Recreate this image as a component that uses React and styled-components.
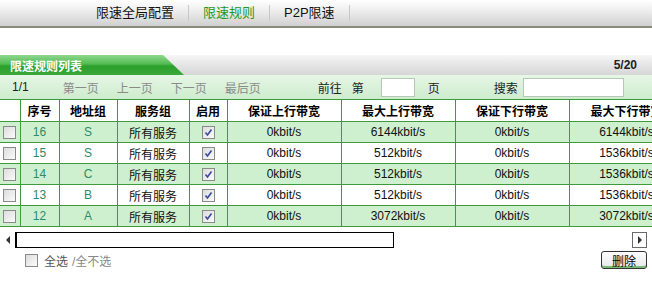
import React from 'react';
import styled, { createGlobalStyle } from 'styled-components';

const GlobalStyle = createGlobalStyle`
  body {
    margin: 0;
    background: #fff;
    font-family: "Liberation Sans", "Noto Sans CJK SC", sans-serif;
    font-size: 12px;
    color: #000;
  }
`;

const Page = styled.div`
  width: 652px;
  height: 281px;
  overflow: hidden;
`;

// Top tab bar
const TopBar = styled.div`
  height: 26px;
  display: flex;
  align-items: center;
  padding-left: 85px;
  background: linear-gradient(to bottom, #ffffff, #eeeeee 40%, #d0d0d0);
  border-bottom: 2px solid #8a8a7a;
`;

const TopTab = styled.div`
  padding: 0 14px 0 11px;
  font-size: 13px;
  color: ${p => (p.active ? '#1e9a1e' : '#111')};
  border-right: 1px solid #c8c8c8;
  line-height: 14px;
  height: 16px;
  display: flex;
  align-items: center;
  margin-right: 3px;
`;

// Section title
const TitleBar = styled.div`
  margin-top: 27px;
  height: 20px;
  display: flex;
  align-items: stretch;
  background: linear-gradient(to bottom, #f6f6f6, #e2e2e2 60%, #d6d6d6);
`;

const TitleTab = styled.div`
  width: 184px;
  padding-left: 10px;
  display: flex;
  align-items: center;
  font-weight: bold;
  color: #fff;
  font-size: 12px;
  background: linear-gradient(to bottom, #8ed88e, #52bb52 45%, #2c9f2c 55%, #3aa83a);
  clip-path: polygon(0 0, 163px 0, 184px 100%, 0 100%);
  box-sizing: border-box;
`;

const TitleCount = styled.div`
  margin-left: auto;
  padding-right: 15px;
  display: flex;
  align-items: center;
  font-weight: bold;
  color: #222;
`;

// Pager
const Pager = styled.div`
  height: 24px;
  display: flex;
  align-items: center;
  background: linear-gradient(to bottom, #e6f6e6, #cdeccd);
  color: #222;
`;

const PageItem = styled.span`
  color: ${p => (p.muted ? '#8a8a8a' : '#222')};
  margin-left: ${p => p.ml}px;
`;

const Input = styled.div`
  width: ${p => p.w}px;
  height: 17px;
  background: #fff;
  border: 1px solid #b8c8b8;
  margin-left: ${p => p.ml}px;
`;

// Table
const TableWrap = styled.div`
  width: 652px;
  overflow: hidden;
`;

const Table = styled.table`
  border-collapse: collapse;
  table-layout: fixed;
  width: 684px;
  border-top: 1px solid #3f9a3f;
`;

const Th = styled.th`
  height: 21px;
  padding: 0;
  border: 1px solid #3f9a3f;
  border-top: none;
  background: #fff;
  font-weight: bold;
  font-size: 12px;
  text-align: center;
  white-space: nowrap;
  overflow: hidden;
  &:first-child { border-left: none; }
`;

const Td = styled.td`
  height: 20px;
  padding: 0;
  border: 1px solid #3f9a3f;
  text-align: center;
  white-space: nowrap;
  overflow: hidden;
  color: ${p => (p.teal ? '#2d8a6a' : '#111')};
  &:first-child { border-left: none; }
`;

const Tr = styled.tr`
  background: ${p => (p.alt ? '#ffffff' : '#cff0cf')};
`;

const Box = styled.span`
  display: inline-flex;
  align-items: center;
  justify-content: center;
  width: 11px;
  height: 11px;
  border: 1px solid #8a8a8a;
  background: linear-gradient(135deg, #dcdcdc, #fbfbfb);
  vertical-align: middle;
`;

const CheckBox = ({ checked }) => (
  <Box>
    {checked && (
      <svg width="9" height="9" viewBox="0 0 9 9">
        <path d="M1.5 4.5 L3.5 7 L7.5 1.5" stroke="#3a4a9a" strokeWidth="1.6" fill="none" />
      </svg>
    )}
  </Box>
);

// Scrollbar
const Scroll = styled.div`
  margin-top: 5px;
  height: 16px;
  display: flex;
  align-items: stretch;
`;

const ArrowBtn = styled.div`
  width: 15px;
  display: flex;
  align-items: center;
  justify-content: center;
  box-sizing: border-box;
  border: ${p => (p.bordered ? '1px solid #6a6a6a' : 'none')};
  margin-left: ${p => (p.right ? 'auto' : '0')};
  margin-right: ${p => (p.right ? '5px' : '0')};
  background: #fff;
`;

const Thumb = styled.div`
  width: 376px;
  border: 1px solid #000;
  border-left-width: 2px;
  background: #fff;
`;

// Footer
const Footer = styled.div`
  margin-top: 3px;
  display: flex;
  align-items: center;
  padding-left: 25px;
  padding-right: 5px;
`;

const SelectAll = styled.span`
  margin-left: 6px;
  color: #555;
  font-size: 12px;
`;

const Slash = styled.span`
  color: #888;
  margin-left: 4px;
`;

const DeleteBtn = styled.button`
  margin-left: auto;
  width: 46px;
  height: 18px;
  padding: 0;
  font-family: inherit;
  font-size: 12px;
  color: #000;
  border: 1px solid #333;
  border-radius: 3px;
  background: linear-gradient(to bottom, #ffffff, #e6e6e6);
  box-shadow: inset 0 -2px 0 #7ab87a;
`;

const cols = [20, 39, 58, 72, 38, 114, 114, 114, 115];
const heads = ['', '序号', '地址组', '服务组', '启用', '保证上行带宽', '最大上行带宽', '保证下行带宽', '最大下行带宽'];

const rows = [
  { id: 16, addr: 'S', up: '6144kbit/s', down: '6144kbit/s' },
  { id: 15, addr: 'S', up: '512kbit/s', down: '1536kbit/s' },
  { id: 14, addr: 'C', up: '512kbit/s', down: '1536kbit/s' },
  { id: 13, addr: 'B', up: '512kbit/s', down: '1536kbit/s' },
  { id: 12, addr: 'A', up: '3072kbit/s', down: '3072kbit/s' },
];

const App = () => (
  <Page>
    <GlobalStyle />
    <TopBar>
      <TopTab>限速全局配置</TopTab>
      <TopTab active>限速规则</TopTab>
      <TopTab>P2P限速</TopTab>
    </TopBar>

    <TitleBar>
      <TitleTab>限速规则列表</TitleTab>
      <TitleCount>5/20</TitleCount>
    </TitleBar>

    <Pager>
      <PageItem ml={12}>1/1</PageItem>
      <PageItem muted ml={34}>第一页</PageItem>
      <PageItem muted ml={18}>上一页</PageItem>
      <PageItem muted ml={18}>下一页</PageItem>
      <PageItem muted ml={18}>最后页</PageItem>
      <PageItem ml={57}>前往</PageItem>
      <PageItem ml={10}>第</PageItem>
      <Input w={32} ml={17} />
      <PageItem ml={13}>页</PageItem>
      <PageItem ml={54}>搜索</PageItem>
      <Input w={99} ml={5} />
    </Pager>

    <TableWrap>
      <Table>
        <colgroup>
          {cols.map((w, i) => <col key={i} style={{ width: w }} />)}
        </colgroup>
        <thead>
          <tr>{heads.map((h, i) => <Th key={i}>{h}</Th>)}</tr>
        </thead>
        <tbody>
          {rows.map((r, i) => (
            <Tr key={r.id} alt={i % 2 === 1}>
              <Td><CheckBox /></Td>
              <Td teal>{r.id}</Td>
              <Td teal>{r.addr}</Td>
              <Td>所有服务</Td>
              <Td><CheckBox checked /></Td>
              <Td>0kbit/s</Td>
              <Td>{r.up}</Td>
              <Td>0kbit/s</Td>
              <Td>{r.down}</Td>
            </Tr>
          ))}
        </tbody>
      </Table>
    </TableWrap>

    <Scroll>
      <ArrowBtn>
        <svg width="6" height="8" viewBox="0 0 6 8"><path d="M5 0 L1 4 L5 8 Z" fill="#333" /></svg>
      </ArrowBtn>
      <Thumb />
      <ArrowBtn right bordered>
        <svg width="6" height="8" viewBox="0 0 6 8"><path d="M1 0 L5 4 L1 8 Z" fill="#333" /></svg>
      </ArrowBtn>
    </Scroll>

    <Footer>
      <CheckBox />
      <SelectAll>全选<Slash>/全不选</Slash></SelectAll>
      <DeleteBtn>删除</DeleteBtn>
    </Footer>
  </Page>
);

export default App;
